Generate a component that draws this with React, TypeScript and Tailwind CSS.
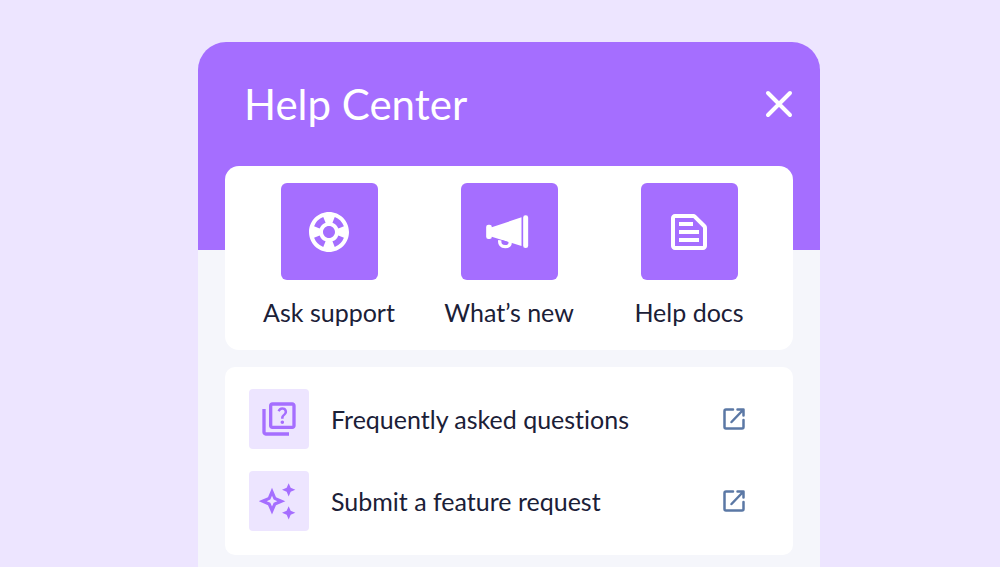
import type { ReactNode } from "react";
import { MdOutlineQuiz, MdOutlineTextSnippet, MdSupport } from "react-icons/md";

function CloseIcon() {
  return (
    <svg width="28" height="28" viewBox="0 0 28 28" fill="none" aria-hidden="true">
      <path d="M3 3l22 22M25 3L3 25" stroke="white" strokeWidth="4" strokeLinecap="round" />
    </svg>
  );
}

function MegaphoneIcon() {
  return (
    <svg width="47" height="34" viewBox="0 0 140 102" fill="currentColor" aria-hidden="true">
      <rect x="0" y="29" width="17" height="43" rx="7" />
      <path d="M12 38L106 7V93L12 64Z" />
      <rect x="111" y="1" width="15" height="98" rx="7" />
      <path d="M41 76C39 88 46 95 57 95S73 89 72 80" fill="none" stroke="currentColor" strokeWidth="10" />
      <path d="M47 75L64 80Q64 87 57 87Q48 86 47 75Z" fill="#a56eff" />
    </svg>
  );
}

function SparklesIcon() {
  return (
    <svg width="40" height="37" viewBox="0 0 120 110" fill="currentColor" aria-hidden="true">
      <path
        fillRule="evenodd"
        d="M39 14L51 42L79 54L51 66L39 94L27 66L-1 54L27 42ZM39 38L34 49L23 54L34 59L39 70L44 59L55 54L44 49Z"
      />
      <path d="M89 0L95 14L109 20L95 26L89 40L83 26L69 20L83 14Z" />
      <path d="M89 69L95 83L109 89L95 95L89 109L83 95L69 89L83 83Z" />
    </svg>
  );
}

function ExternalIcon() {
  return (
    <svg
      className="shrink-0 text-[#5b78a5]"
      width="22"
      height="22"
      viewBox="0 0 22 22"
      fill="none"
      stroke="currentColor"
      strokeWidth="2.5"
      strokeLinecap="round"
      strokeLinejoin="round"
      aria-hidden="true"
    >
      <path d="M10 1.500H3Q1.500 1.500 1.500 3V19Q1.500 20.500 3 20.500H19Q20.500 20.500 20.500 19V12" />
      <path d="M8.500 14L20 2M14.500 1.500H20.500V7.500" />
    </svg>
  );
}

function Shortcut({ icon, label }: { icon: ReactNode; label: string }) {
  return (
    <button className="flex flex-col items-center gap-4">
      <span className="flex size-[97px] items-center justify-center rounded-md bg-[#a56eff] text-white">
        {icon}
      </span>
      <span className="text-[25px] leading-8 whitespace-nowrap">{label}</span>
    </button>
  );
}

function LinkRow({ icon, label }: { icon: ReactNode; label: string }) {
  return (
    <a href="#" className="flex items-center">
      <span className="flex size-[60px] shrink-0 items-center justify-center rounded-sm bg-[#ede5ff] text-[#a56eff]">
        {icon}
      </span>
      <span className="ml-[22px] flex-1 text-[25px] leading-8">{label}</span>
      <ExternalIcon />
    </a>
  );
}

export default function App() {
  return (
    <main className="flex min-h-screen flex-col bg-[#ede5ff] pt-[42px] pr-[180px] pl-[198px] font-['Lato','Noto_Sans',sans-serif] text-[#1b2037] [font-variant-ligatures:none]">
      <section className="flex-1 rounded-t-[28px] bg-[#f5f6fb]">
        <header className="flex h-52 items-start justify-between rounded-t-[28px] bg-[#a56eff] pt-9 pr-[27px] pl-[46px] text-white">
          <h1 className="text-[42px] leading-[52px]">Help Center</h1>
          <button aria-label="Close" className="mt-3">
            <CloseIcon />
          </button>
        </header>
        <div className="-mt-21 flex flex-col gap-[17px] px-[27px] pb-3">
          <div className="grid grid-cols-3 rounded-[14px] bg-white px-[14px] pt-[17px] pb-[22px]">
            <Shortcut icon={<MdSupport size={48} />} label="Ask support" />
            <Shortcut icon={<MegaphoneIcon />} label="What’s new" />
            <Shortcut icon={<MdOutlineTextSnippet size={48} />} label="Help docs" />
          </div>
          <nav className="flex flex-col gap-[22px] rounded-[10px] bg-white pt-[22px] pr-12 pb-6 pl-6">
            <LinkRow icon={<MdOutlineQuiz size={40} />} label="Frequently asked questions" />
            <LinkRow icon={<SparklesIcon />} label="Submit a feature request" />
          </nav>
        </div>
      </section>
    </main>
  );
}
